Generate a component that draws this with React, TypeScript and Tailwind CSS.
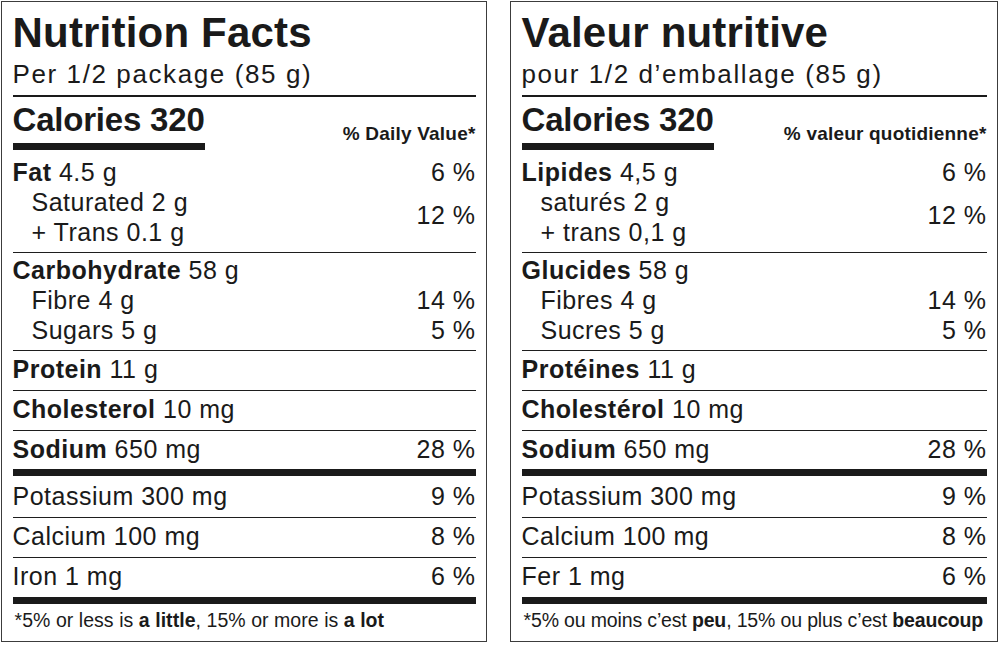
import React from "react";

type Line = { b?: string; r?: string; pct?: string };

type LabelData = {
  title: string;
  serving: string;
  calories: string;
  dv: string;
  fat: Line;
  satTrans: [string, string];
  satPct: string;
  carb: Line;
  carbSubs: Line[];
  protein: Line;
  chol: Line;
  sodium: Line;
  minerals: Line[];
  foot: React.ReactNode;
  footCls: string;
};

const en: LabelData = {
  title: "Nutrition Facts",
  serving: "Per 1/2 package (85 g)",
  calories: "Calories 320",
  dv: "% Daily Value*",
  fat: { b: "Fat", r: " 4.5 g", pct: "6 %" },
  satTrans: ["Saturated 2 g", "+ Trans 0.1 g"],
  satPct: "12 %",
  carb: { b: "Carbohydrate", r: " 58 g" },
  carbSubs: [
    { r: "Fibre 4 g", pct: "14 %" },
    { r: "Sugars 5 g", pct: "5 %" },
  ],
  protein: { b: "Protein", r: " 11 g" },
  chol: { b: "Cholesterol", r: " 10 mg" },
  sodium: { b: "Sodium", r: " 650 mg", pct: "28 %" },
  minerals: [
    { r: "Potassium 300 mg", pct: "9 %" },
    { r: "Calcium 100 mg", pct: "8 %" },
    { r: "Iron 1 mg", pct: "6 %" },
  ],
  foot: (
    <>
      *5% or less is <b className="font-bold">a little</b>, 15% or more is{" "}
      <b className="font-bold">a lot</b>
    </>
  ),
  footCls: "tracking-[0.05px]",
};

const fr: LabelData = {
  title: "Valeur nutritive",
  serving: "pour 1/2 d’emballage (85 g)",
  calories: "Calories 320",
  dv: "% valeur quotidienne*",
  fat: { b: "Lipides", r: " 4,5 g", pct: "6 %" },
  satTrans: ["saturés 2 g", "+ trans 0,1 g"],
  satPct: "12 %",
  carb: { b: "Glucides", r: " 58 g" },
  carbSubs: [
    { r: "Fibres 4 g", pct: "14 %" },
    { r: "Sucres 5 g", pct: "5 %" },
  ],
  protein: { b: "Protéines", r: " 11 g" },
  chol: { b: "Cholestérol", r: " 10 mg" },
  sodium: { b: "Sodium", r: " 650 mg", pct: "28 %" },
  minerals: [
    { r: "Potassium 300 mg", pct: "9 %" },
    { r: "Calcium 100 mg", pct: "8 %" },
    { r: "Fer 1 mg", pct: "6 %" },
  ],
  foot: (
    <>
      *5% ou moins c’est <b className="font-bold">peu</b>, 15% ou plus c’est{" "}
      <b className="font-bold">beaucoup</b>
    </>
  ),
  footCls: "tracking-[-0.15px]",
};

function Text({ l }: { l: Line }) {
  return (
    <span className="whitespace-pre">
      {l.b ? <b className="font-bold">{l.b}</b> : null}
      {l.r}
    </span>
  );
}

function Row({ l, cls, indent }: { l: Line; cls: string; indent?: boolean }) {
  return (
    <div className={"flex justify-between " + cls}>
      <div className={indent ? "pl-[19px]" : ""}>
        <Text l={l} />
      </div>
      {l.pct ? <div>{l.pct}</div> : null}
    </div>
  );
}

const Thin = () => <div className="h-px bg-[#1e1e1e]" />;
const Thick = () => <div className="h-[7px] bg-[#1a1a1a]" />;

function Label({ d, w }: { d: LabelData; w: string }) {
  return (
    <div
      className={
        w +
        " h-[641px] border-[1.5px] border-[#3c3c3c] px-[10.5px] pt-[10px] flex flex-col text-[#1a1a1a] [font-family:'Liberation_Sans',Arial,sans-serif]"
      }
    >
      <div className="text-[42px] leading-[42px] font-bold tracking-[0.2px] whitespace-nowrap">
        {d.title}
      </div>
      <div className="text-[26px] leading-[40px] tracking-[1.6px] whitespace-nowrap">
        {d.serving}
      </div>
      <div className="h-[2px] mt-[0.5px] bg-[#1a1a1a]" />
      <div className="flex items-end justify-between pt-[6px]">
        <div className="inline-flex flex-col">
          <div className="text-[33px] leading-[33px] font-bold tracking-[-0.2px] whitespace-nowrap">
            {d.calories}
          </div>
          <div className="h-[7px] mt-[7px] bg-[#1a1a1a]" />
        </div>
        <div className="text-[19px] leading-[19px] font-bold tracking-[0.2px] mb-[6.5px] whitespace-nowrap">
          {d.dv}
        </div>
      </div>

      <div className="text-[25px] tracking-[0.5px]">
        <div className="pt-[7px] pb-[5px]">
          <Row l={d.fat} cls="leading-[30px]" />
          <div className="flex justify-between items-center leading-[30px]">
            <div className="pl-[19px]">
              <div>{d.satTrans[0]}</div>
              <div>{d.satTrans[1]}</div>
            </div>
            <div className="-mt-[4px]">{d.satPct}</div>
          </div>
        </div>
        <Thin />
        <div className="pt-[2px] pb-[5px]">
          <Row l={d.carb} cls="leading-[30px]" />
          {d.carbSubs.map((s, i) => (
            <Row key={i} l={s} cls="leading-[30px]" indent />
          ))}
        </div>
        <Thin />
        <Row l={d.protein} cls="leading-[36px] pb-[3px]" />
        <Thin />
        <Row l={d.chol} cls="leading-[36px] pb-[3px]" />
        <Thin />
        <Row l={d.sodium} cls="leading-[36px] pb-[2px]" />
        <Thick />
        <Row l={d.minerals[0]} cls="leading-[36px] pt-[2px] pb-[3px]" />
        <Thin />
        <Row l={d.minerals[1]} cls="leading-[36px] pb-[3px]" />
        <Thin />
        <Row l={d.minerals[2]} cls="leading-[36px] pb-[3px]" />
        <Thick />
      </div>
      <div
        className={
          "pt-[4px] pl-[2px] text-[19.5px] leading-[24px] whitespace-nowrap " +
          d.footCls
        }
      >
        {d.foot}
      </div>
    </div>
  );
}

export default function App() {
  return (
    <div className="w-[1000px] h-[645px] bg-white flex gap-[23px] pl-[1px] pt-[1px]">
      <Label d={en} w="w-[486px]" />
      <Label d={fr} w="w-[488px]" />
    </div>
  );
}
